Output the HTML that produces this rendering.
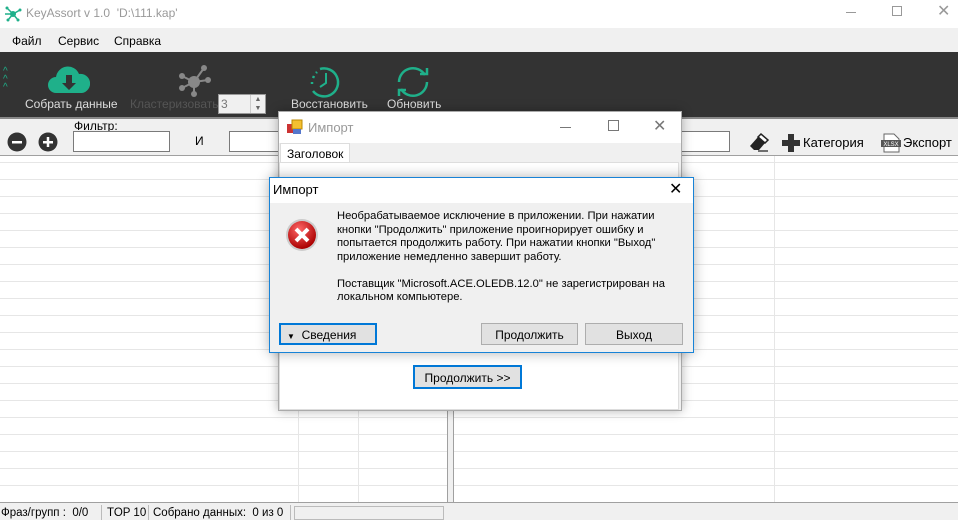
<!DOCTYPE html>
<html><head><meta charset="utf-8"><style>
*{box-sizing:border-box;margin:0;padding:0}
body{width:958px;height:520px;overflow:hidden;position:relative;background:#f0f0f0;font-family:"Liberation Sans","DejaVu Sans",sans-serif;font-size:12px;color:#000}
.a{position:absolute}
.grid{background-color:#fff;background-image:repeating-linear-gradient(to bottom,transparent 0,transparent 16px,#e6e6e6 16px,#e6e6e6 17px);background-position:0 -10px}
.btn{position:absolute;background:#e1e1e1;border:1px solid #adadad;text-align:center;font-size:12px}
</style></head><body>
<div class="a" style="left:0;top:0;width:958px;height:28px;background:#fff"></div>
<svg class="a" style="left:4px;top:5px" width="18" height="18" viewBox="0 0 18 18"><g stroke="#1fb08a" stroke-width="1.5"><line x1="9" y1="9" x2="3" y2="3"/><line x1="9" y1="9" x2="16" y2="5"/><line x1="9" y1="9" x2="4" y2="15"/><line x1="9" y1="9" x2="14" y2="15"/><line x1="9" y1="9" x2="1" y2="9"/></g><circle cx="9" cy="9" r="3" fill="#1fb08a"/><circle cx="3" cy="3" r="1.5" fill="#1fb08a"/><circle cx="16" cy="5" r="1.5" fill="#1fb08a"/><circle cx="4" cy="15" r="1.5" fill="#1fb08a"/><circle cx="14" cy="15" r="1.5" fill="#1fb08a"/></svg>
<div class="a" style="left:26px;top:6px;color:#999;font-size:12px">KeyAssort v 1.0 &nbsp;'D:\111.kap'</div>
<div class="a" style="left:846px;top:12px;width:10px;height:1px;background:#999"></div>
<div class="a" style="left:892px;top:6px;width:10px;height:10px;border:1px solid #999"></div>
<div class="a" style="left:937px;top:1px;color:#999;font-size:16px">✕</div>
<div class="a" style="left:0;top:28px;width:958px;height:24px;background:#f0f0f0"></div>
<div class="a" style="left:12px;top:34px">Файл</div>
<div class="a" style="left:58px;top:34px">Сервис</div>
<div class="a" style="left:114px;top:34px">Справка</div>
<div class="a" style="left:0;top:52px;width:958px;height:65px;background:#333"></div>
<div class="a" style="left:0;top:117px;width:958px;height:2px;background:#888"></div>
<div class="a" style="left:3px;top:68px;color:#1fb08a;font-size:10px;line-height:8px">^<br>^<br>^</div>
<svg class="a" style="left:48px;top:63px" width="42" height="32" viewBox="0 0 42 32"><path d="M8 30a8 8 0 0 1 0-16a12 12 0 0 1 23-3a9 9 0 0 1 3 19z" fill="#1fb08a"/><path d="M18 12h6v8h4l-7 7-7-7h4z" fill="#333"/></svg>
<div class="a" style="left:25px;top:97px;color:#ddd">Собрать данные</div>
<svg class="a" style="left:176px;top:64px" width="36" height="34" viewBox="0 0 36 34"><g stroke="#888" stroke-width="2"><line x1="18" y1="18" x2="6" y2="12"/><line x1="18" y1="18" x2="28" y2="4"/><line x1="18" y1="18" x2="32" y2="16"/><line x1="18" y1="18" x2="18" y2="30"/><line x1="18" y1="18" x2="6" y2="24"/></g><circle cx="18" cy="18" r="6" fill="#888"/><circle cx="6" cy="12" r="3" fill="#888"/><circle cx="28" cy="4" r="3" fill="#888"/><circle cx="32" cy="16" r="3" fill="#888"/><circle cx="18" cy="30" r="3" fill="#888"/><circle cx="6" cy="24" r="3" fill="#888"/></svg>
<div class="a" style="left:130px;top:97px;color:#555">Кластеризовать</div>
<div class="a" style="left:218px;top:94px;width:48px;height:20px;background:#f0f0f0;border:1px solid #999;color:#777;padding:2px 2px">3</div>
<div class="a" style="left:250px;top:95px;width:15px;height:18px;border-left:1px solid #ccc;font-size:7px;color:#666;text-align:center;line-height:9px">▲<br>▼</div>
<svg class="a" style="left:308px;top:64px" width="36" height="36" viewBox="0 0 36 36"><path d="M12 5a14 14 0 1 1-7 22" fill="none" stroke="#1fb08a" stroke-width="2.5"/><path d="M4 20v-2M5 14l1-2M8 9l1-1" stroke="#1fb08a" stroke-width="2.5"/><path d="M18 9v10l-6 4" fill="none" stroke="#1fb08a" stroke-width="2"/></svg>
<div class="a" style="left:291px;top:97px;color:#ddd">Восстановить</div>
<svg class="a" style="left:390px;top:64px" width="46" height="36" viewBox="0 0 46 36"><path d="M9 18a14 14 0 0 1 26-7M37 18a14 14 0 0 1-26 7" fill="none" stroke="#1fb08a" stroke-width="2.5"/><path d="M30 10h7v-6M16 26H9v6" fill="none" stroke="#1fb08a" stroke-width="2.5"/></svg>
<div class="a" style="left:387px;top:97px;color:#ddd">Обновить</div>
<svg class="a" style="left:7px;top:132px" width="20" height="20"><circle cx="10" cy="10" r="9.5" fill="#333"/><rect x="5" y="9" width="10" height="2.5" fill="#fff"/></svg>
<svg class="a" style="left:38px;top:132px" width="20" height="20"><circle cx="10" cy="10" r="9.5" fill="#333"/><rect x="5" y="9" width="10" height="2.5" fill="#fff"/><rect x="8.75" y="5" width="2.5" height="10" fill="#fff"/></svg>
<div class="a" style="left:74px;top:119px">Фильтр:</div>
<div class="a" style="left:73px;top:131px;width:97px;height:21px;background:#fff;border:1px solid #7a7a7a"></div>
<div class="a" style="left:195px;top:134px">И</div>
<div class="a" style="left:229px;top:131px;width:60px;height:21px;background:#fff;border:1px solid #7a7a7a"></div>
<div class="a" style="left:680px;top:131px;width:50px;height:21px;background:#fff;border:1px solid #7a7a7a;border-left:none"></div>
<svg class="a" style="left:748px;top:131px" width="22" height="22" viewBox="0 0 22 22"><path d="M2 15l8-9 7 6-6 7H6z" fill="#222"/><path d="M10 6l3-3 7 6-3 3z" fill="#fff" stroke="#222" stroke-width="1.5"/><path d="M10 20h10" stroke="#444" stroke-width="1.5"/></svg>
<svg class="a" style="left:781px;top:133px" width="20" height="20"><rect x="7" y="1" width="6" height="18" fill="#333"/><rect x="1" y="7" width="18" height="6" fill="#333"/></svg>
<div class="a" style="left:803px;top:135px;font-size:13px">Категория</div>
<svg class="a" style="left:881px;top:133px" width="20" height="20"><path d="M3 1h10l5 5v13H3z" fill="#fff" stroke="#666"/><rect x="0" y="7" width="20" height="7" fill="#555"/><text x="10" y="13" font-size="6" fill="#fff" text-anchor="middle" font-family="Liberation Sans">XLSX</text></svg>
<div class="a" style="left:903px;top:135px;font-size:13px">Экспорт</div>
<div class="a" style="left:0;top:155px;width:958px;height:1px;background:#a0a0a0"></div>
<div class="a grid" style="left:0;top:156px;width:447px;height:346px"></div>
<div class="a" style="left:298px;top:156px;width:1px;height:346px;background:#e6e6e6"></div>
<div class="a" style="left:358px;top:156px;width:1px;height:346px;background:#e6e6e6"></div>
<div class="a" style="left:447px;top:156px;width:1px;height:346px;background:#a0a0a0"></div>
<div class="a grid" style="left:453px;top:156px;width:505px;height:346px;border-left:1px solid #a0a0a0"></div>
<div class="a" style="left:774px;top:156px;width:1px;height:346px;background:#e6e6e6"></div>
<div class="a" style="left:0;top:502px;width:958px;height:1px;background:#a0a0a0"></div>
<div class="a" style="left:1px;top:507px;font-size:11.5px;white-space:pre">Фраз/групп :  0/0</div>
<div class="a" style="left:101px;top:505px;width:1px;height:15px;background:#bbb"></div>
<div class="a" style="left:107px;top:507px;font-size:11.5px">TOP 10</div>
<div class="a" style="left:148px;top:505px;width:1px;height:15px;background:#bbb"></div>
<div class="a" style="left:153px;top:507px;white-space:pre;font-size:11.5px">Собрано данных:  0 из 0</div>
<div class="a" style="left:290px;top:505px;width:1px;height:15px;background:#bbb"></div>
<div class="a" style="left:294px;top:506px;width:150px;height:14px;border:1px solid #bbb"></div>
<div class="a" style="left:278px;top:111px;width:404px;height:300px;background:#f0f0f0;border:1px solid #aaa;box-shadow:0 0 10px rgba(0,0,0,.3)"></div>
<div class="a" style="left:279px;top:112px;width:402px;height:31px;background:#fff"></div>
<svg class="a" style="left:287px;top:119px" width="16" height="16"><rect x="0" y="5" width="7" height="9" fill="#c33"/><rect x="5" y="1" width="10" height="9" fill="#f4c030" stroke="#b80"/><rect x="6" y="10" width="8" height="5" fill="#57c"/></svg>
<div class="a" style="left:308px;top:120px;color:#999;font-size:13px">Импорт</div>
<div class="a" style="left:560px;top:127px;width:11px;height:1px;background:#777"></div>
<div class="a" style="left:608px;top:120px;width:11px;height:11px;border:1px solid #777"></div>
<div class="a" style="left:653px;top:116px;color:#777;font-size:16px">✕</div>
<div class="a" style="left:280px;top:143px;width:70px;height:20px;background:#fff;border:1px solid #ddd;border-bottom:none;padding:3px 0 0 6px">Заголовок</div>
<div class="a" style="left:279px;top:162px;width:400px;height:248px;background:#fff;border:1px solid #ddd"></div>
<div class="btn" style="left:413px;top:365px;width:109px;height:24px;border:2px solid #0078d7;padding-top:4px">Продолжить &gt;&gt;</div>
<div class="a" style="left:269px;top:177px;width:425px;height:176px;background:#f0f0f0;border:1px solid #1883d7;box-shadow:0 0 12px rgba(0,0,0,.3)"></div>
<div class="a" style="left:270px;top:178px;width:423px;height:25px;background:#fff"></div>
<div class="a" style="left:273px;top:182px;font-size:13px">Импорт</div>
<div class="a" style="left:669px;top:179px;font-size:16px">✕</div>
<svg class="a" style="left:285px;top:218px" width="34" height="34" viewBox="0 0 34 34"><defs><radialGradient id="g" cx="40%" cy="30%" r="70%"><stop offset="0" stop-color="#f66"/><stop offset="1" stop-color="#a00"/></radialGradient></defs><circle cx="17" cy="17" r="16" fill="#ccc"/><circle cx="17" cy="17" r="14" fill="url(#g)"/><path d="M11 11l12 12M23 11L11 23" stroke="#fff" stroke-width="4"/></svg>
<div class="a" style="left:337px;top:210px;line-height:13.5px;font-size:11.2px;width:350px">Необрабатываемое исключение в приложении. При нажатии кнопки "Продолжить" приложение проигнорирует ошибку и попытается продолжить работу. При нажатии кнопки "Выход" приложение немедленно завершит работу.<br><br>Поставщик "Microsoft.ACE.OLEDB.12.0" не зарегистрирован на локальном компьютере.</div>
<div class="btn" style="left:279px;top:323px;width:98px;height:22px;border:2px solid #0078d7;text-align:left;padding:3px 0 0 6px"><span style="font-size:8px">▼</span>&nbsp; Сведения</div>
<div class="btn" style="left:481px;top:323px;width:97px;height:22px;padding-top:4px">Продолжить</div>
<div class="btn" style="left:585px;top:323px;width:98px;height:22px;padding-top:4px">Выход</div>
</body></html>
